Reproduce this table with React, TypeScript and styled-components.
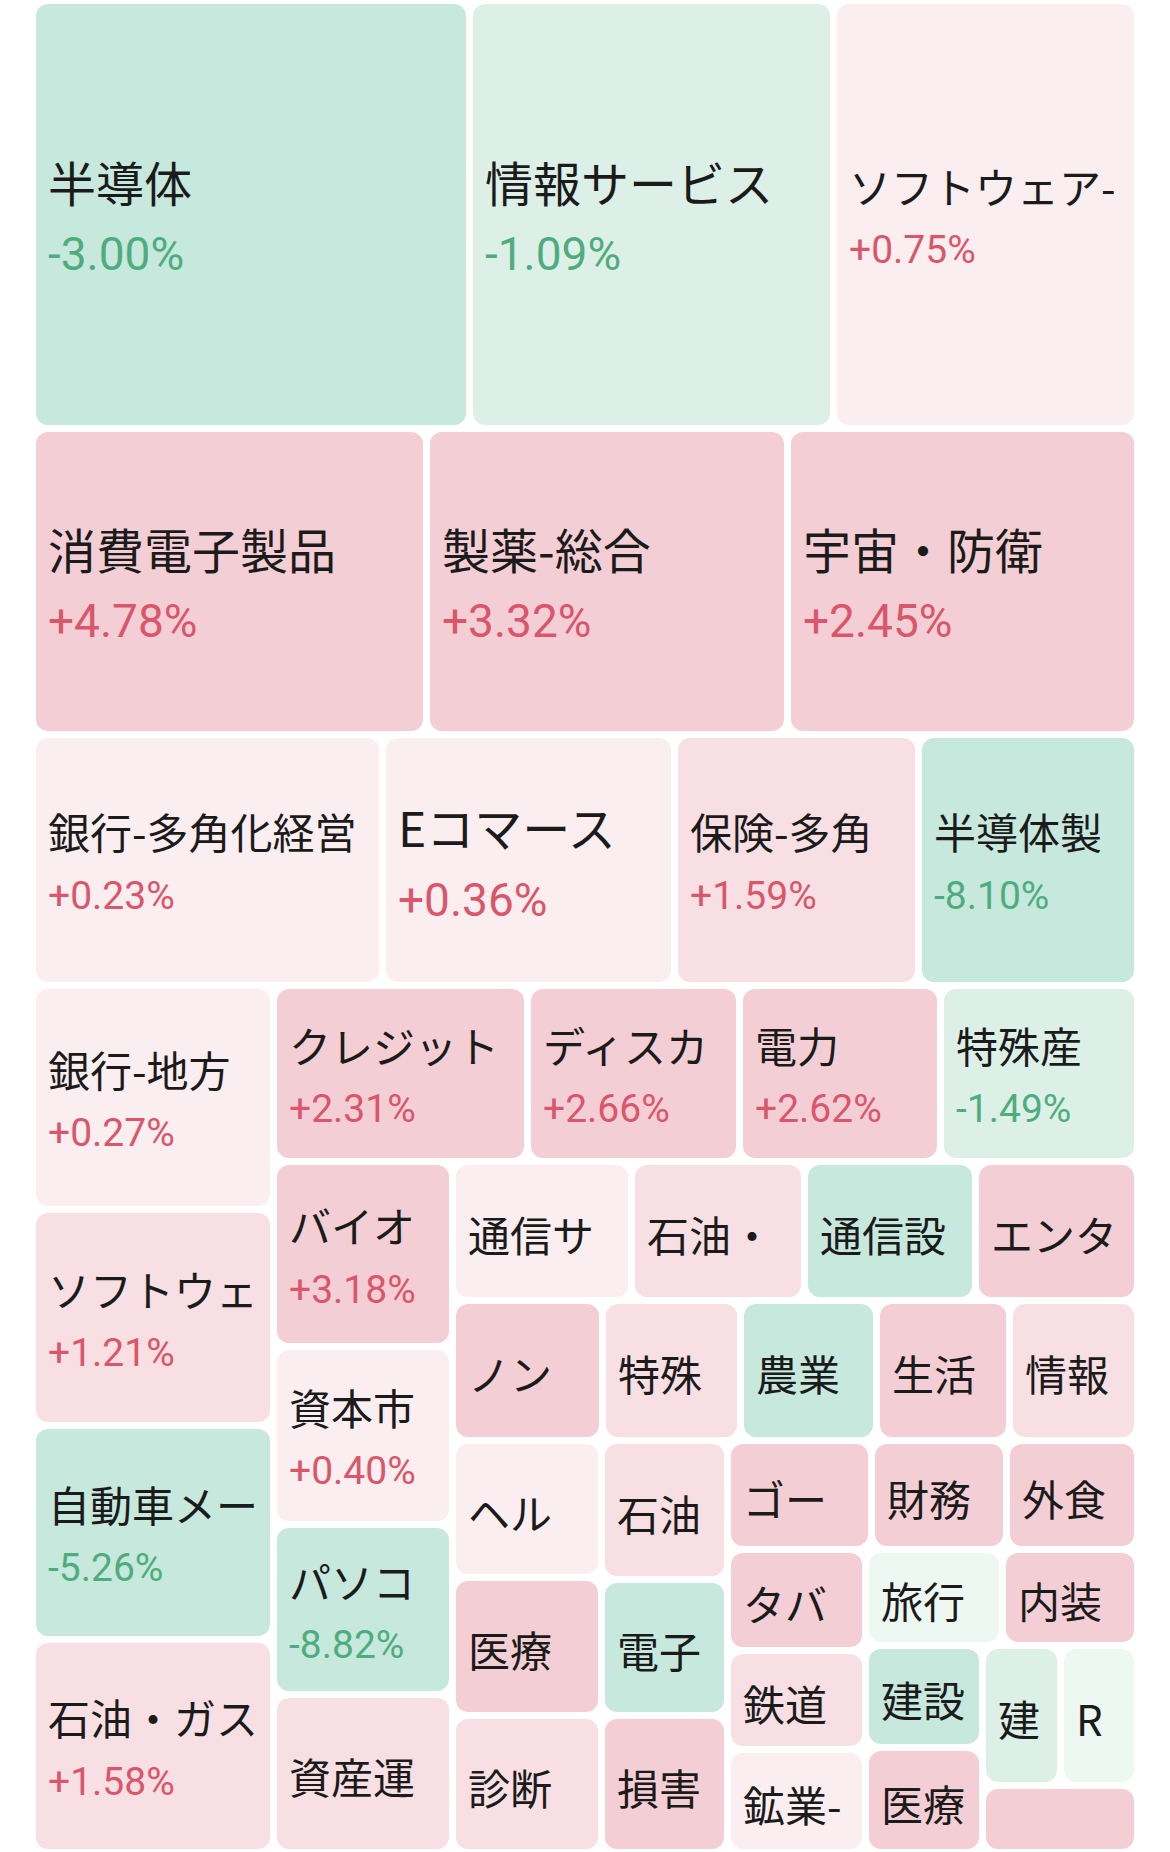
import React from 'react'
import styled, { createGlobalStyle } from 'styled-components'

type Tone = 'g3' | 'g2' | 'g1' | 'p3' | 'p2' | 'p1'

interface TileNode {
  kind: 'tile'
  size: number
  name: string
  pct?: string
  tone: Tone
  big?: boolean
}

interface SplitNode {
  kind: 'split'
  dir: 'row' | 'column'
  size: number
  items: Node[]
}

type Node = TileNode | SplitNode

const FILL: Record<Tone, string> = {
  g3: '#c7e8dd',
  g2: '#ddf0e8',
  g1: '#edf8f3',
  p3: '#f4ced5',
  p2: '#f8dfe3',
  p1: '#fbeef0',
}

const GlobalStyle = createGlobalStyle`
  html, body {
    margin: 0;
    padding: 0;
    background: #ffffff;
  }
  body {
    font-family: "Noto Sans CJK JP", "Noto Sans", sans-serif;
    overflow: hidden;
  }
`

const Board = styled.div`
  width: 1170px;
  box-sizing: border-box;
  padding: 4px 36px 0;
  display: flex;
  flex-direction: column;
  gap: 7px;
`

const Split = styled.div<{ $dir: 'row' | 'column'; $size: number }>`
  flex: 0 0 ${p => p.$size}px;
  display: flex;
  flex-direction: ${p => p.$dir};
  gap: 7px;
  min-width: 0;
  min-height: 0;
`

const Tile = styled.div<{ $tone: Tone; $size: number }>`
  flex: 0 0 ${p => p.$size}px;
  min-width: 0;
  min-height: 0;
  background: ${p => FILL[p.$tone]};
  border-radius: 12px;
  overflow: hidden;
  display: flex;
  flex-direction: column;
  justify-content: center;
  padding: 6px 0 0 12px;
  box-sizing: border-box;
`

const Title = styled.div<{ $big?: boolean }>`
  font-family: "Noto Sans CJK JP", sans-serif;
  font-size: ${p => (p.$big ? 48 : 42)}px;
  line-height: 1.3;
  color: #1b1b1b;
  white-space: nowrap;
`

const Change = styled.div<{ $big?: boolean; $down: boolean }>`
  font-family: Roboto, "Noto Sans", sans-serif;
  font-size: ${p => (p.$big ? 46 : 39)}px;
  line-height: 1.3;
  margin-top: ${p => (p.$big ? 13 : 12)}px;
  color: ${p => (p.$down ? '#4fad7d' : '#d9566b')};
  white-space: nowrap;
`

const t = (size: number, name: string, tone: Tone, pct?: string, big?: boolean): TileNode => ({
  kind: 'tile', size, name, tone, pct, big,
})
const row = (size: number, items: Node[]): SplitNode => ({ kind: 'split', dir: 'row', size, items })
const col = (size: number, items: Node[]): SplitNode => ({ kind: 'split', dir: 'column', size, items })

const rows: Node[] = [
  row(421, [
    t(430, '半導体', 'g3', '-3.00%', true),
    t(357, '情報サービス', 'g2', '-1.09%', true),
    t(297, 'ソフトウェア-', 'p1', '+0.75%'),
  ]),
  row(299, [
    t(387, '消費電子製品', 'p3', '+4.78%', true),
    t(354, '製薬-総合', 'p3', '+3.32%', true),
    t(343, '宇宙・防衛', 'p3', '+2.45%', true),
  ]),
  row(244, [
    t(343, '銀行-多角化経営', 'p1', '+0.23%'),
    t(285, 'Eコマース', 'p1', '+0.36%', true),
    t(237, '保険-多角', 'p2', '+1.59%'),
    t(212, '半導体製', 'g3', '-8.10%'),
  ]),
  row(860, [
    col(234, [
      t(217, '銀行-地方', 'p1', '+0.27%'),
      t(209, 'ソフトウェ', 'p2', '+1.21%'),
      t(207, '自動車メー', 'g3', '-5.26%'),
      t(206, '石油・ガス', 'p2', '+1.58%'),
    ]),
    col(857, [
      row(169, [
        t(247, 'クレジット', 'p3', '+2.31%'),
        t(205, 'ディスカ', 'p3', '+2.66%'),
        t(194, '電力', 'p3', '+2.62%'),
        t(190, '特殊産', 'g2', '-1.49%'),
      ]),
      row(684, [
        col(172, [
          t(178, 'バイオ', 'p3', '+3.18%'),
          t(171, '資本市', 'p1', '+0.40%'),
          t(163, 'パソコ', 'g3', '-8.82%'),
          t(151, '資産運', 'p2'),
        ]),
        col(678, [
          row(132, [
            t(172, '通信サ', 'p1'),
            t(166, '石油・', 'p2'),
            t(164, '通信設', 'g3'),
            t(155, 'エンタ', 'p3'),
          ]),
          row(133, [
            t(143, 'ノン', 'p3'),
            t(131, '特殊', 'p2'),
            t(129, '農業', 'g3'),
            t(126, '生活', 'p3'),
            t(121, '情報', 'p2'),
          ]),
          row(405, [
            row(268, [
              col(142, [
                t(130, 'ヘル', 'p1'),
                t(131, '医療', 'p3'),
                t(130, '診断', 'p2'),
              ]),
              col(119, [
                t(132, '石油', 'p2'),
                t(129, '電子', 'g3'),
                t(130, '損害', 'p3'),
              ]),
            ]),
            col(403, [
              row(102, [
                t(137, 'ゴー', 'p3'),
                t(128, '財務', 'p3'),
                t(124, '外食', 'p3'),
              ]),
              row(296, [
                col(131, [
                  t(94, 'タバ', 'p3'),
                  t(92, '鉄道', 'p2'),
                  t(96, '鉱業-', 'p1'),
                ]),
                col(265, [
                  row(89, [
                    t(130, '旅行', 'g1'),
                    t(128, '内装', 'p3'),
                  ]),
                  row(200, [
                    col(110, [
                      t(95, '建設', 'g3'),
                      t(98, '医療', 'p3'),
                    ]),
                    col(148, [
                      row(133, [
                        t(71, '建', 'g2'),
                        t(70, 'R', 'g1'),
                      ]),
                      t(60, '', 'p3'),
                    ]),
                  ]),
                ]),
              ]),
            ]),
          ]),
        ]),
      ]),
    ]),
  ]),
]

function Cell({ node }: { node: Node }) {
  if (node.kind === 'split') {
    return (
      <Split $dir={node.dir} $size={node.size}>
        {node.items.map((n, i) => <Cell key={i} node={n} />)}
      </Split>
    )
  }
  return (
    <Tile $tone={node.tone} $size={node.size}>
      {node.name && <Title $big={node.big}>{node.name}</Title>}
      {node.pct && (
        <Change $big={node.big} $down={node.pct.startsWith('-')}>
          {node.pct}
        </Change>
      )}
    </Tile>
  )
}

export default function App() {
  return (
    <>
      <GlobalStyle />
      <Board>
        {rows.map((n, i) => <Cell key={i} node={n} />)}
      </Board>
    </>
  )
}
